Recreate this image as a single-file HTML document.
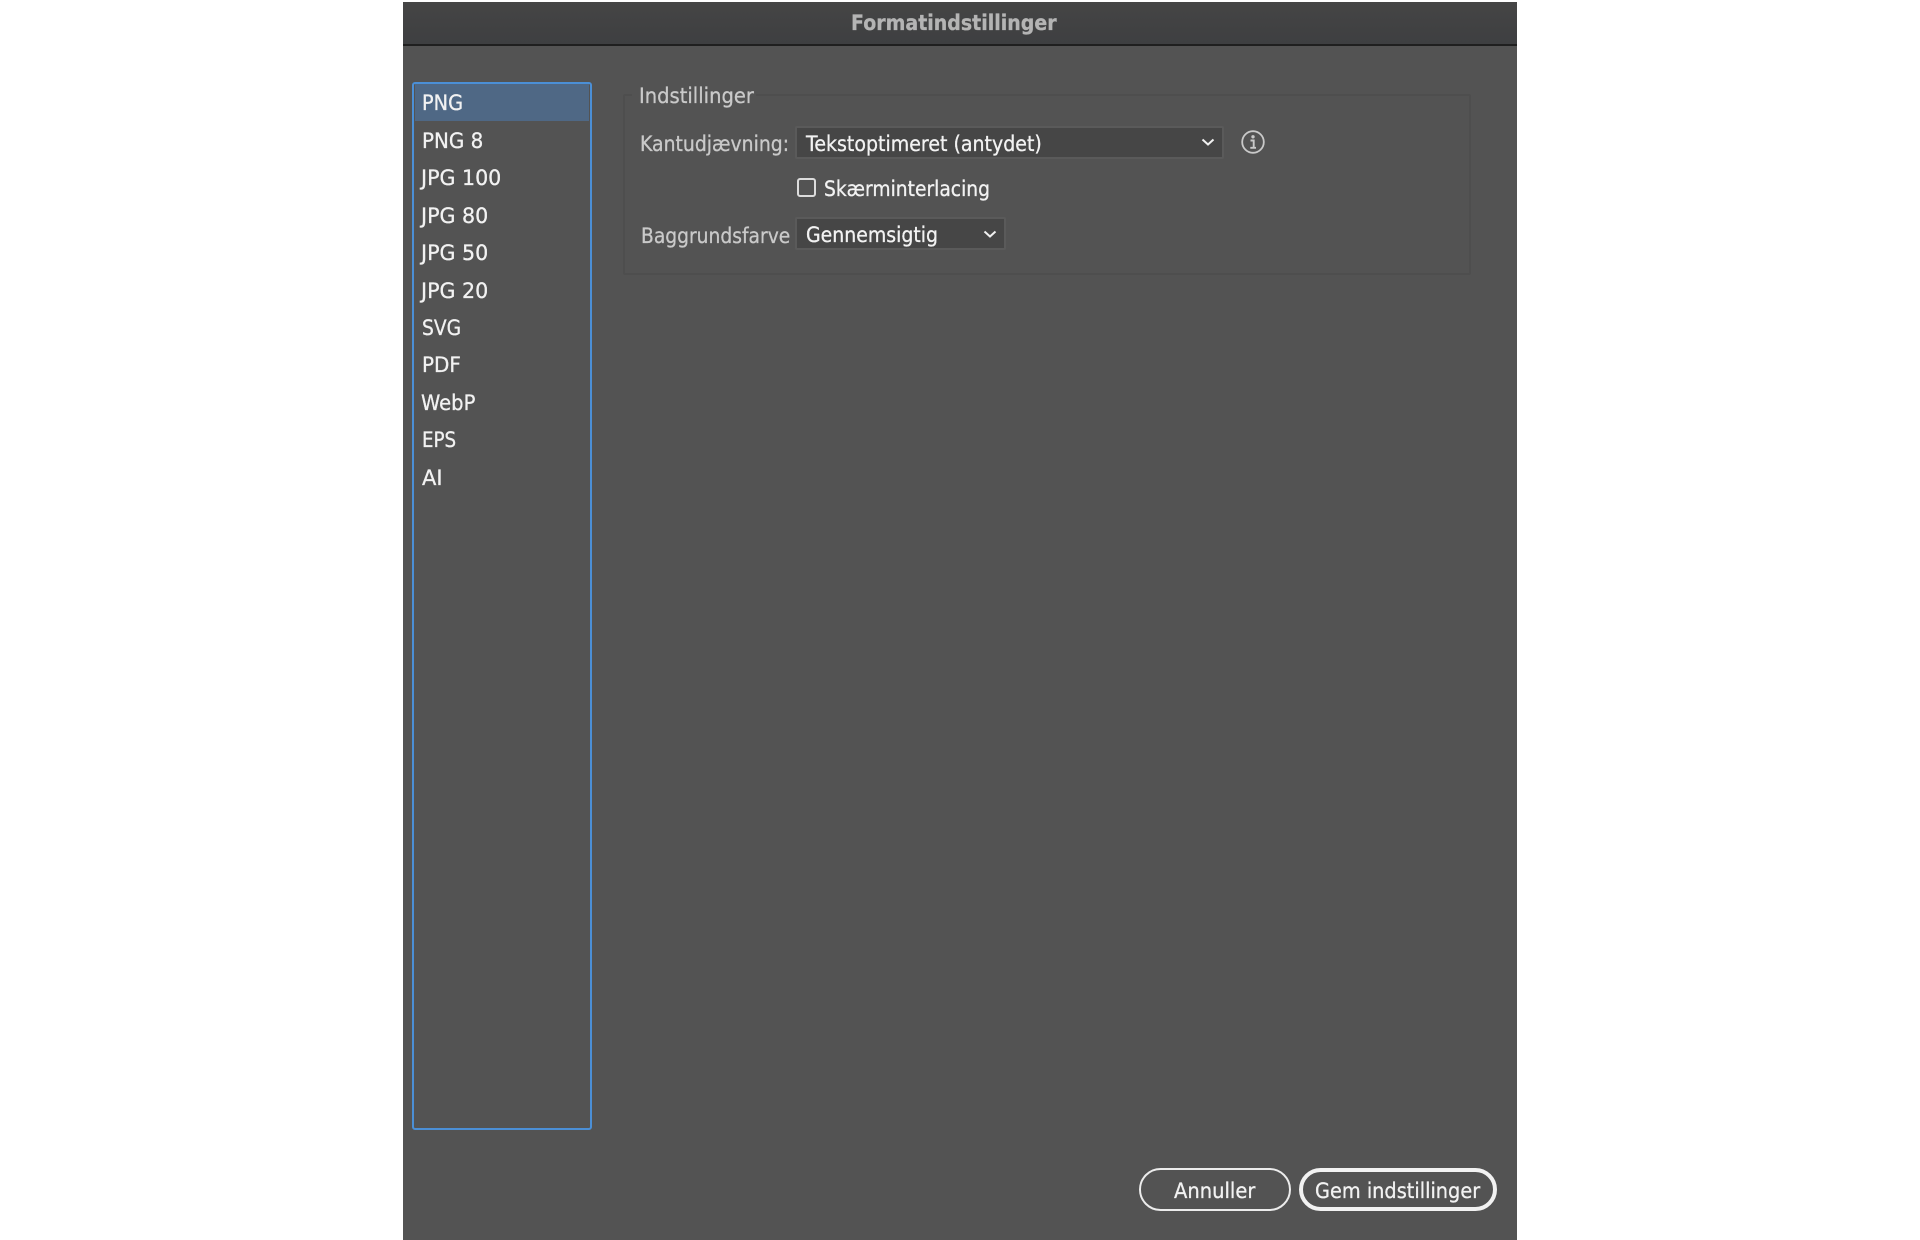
<!DOCTYPE html>
<html lang="da"><head><meta charset="utf-8"><title>Formatindstillinger</title>
<style>
html,body{margin:0;padding:0;background:#fff}
body{width:1920px;height:1240px;position:relative;overflow:hidden;font-family:"DejaVu Sans","Liberation Sans",sans-serif}
.a{position:absolute;box-sizing:border-box}
.t{position:absolute;white-space:nowrap;font-size:21px;line-height:26px;height:26px;transform:scaleX(.89);transform-origin:0 50%;color:#f2f2f2;-webkit-text-stroke:.3px currentColor;filter:blur(.3px)}
.l{color:#c9c9c9}
.sel{background:#464646;border:2px solid #5a5a5a;border-radius:2px}
</style></head><body>
<div class="a" style="left:403px;top:2px;width:1114px;height:1238px;background:#535353"></div>
<div class="a" style="left:403px;top:2px;width:1114px;height:42px;background:linear-gradient(#454545,#3e3f41)"></div>
<div class="a" style="left:403px;top:44px;width:1114px;height:2px;background:#1f1f1f"></div>
<div class="t" style="left:851px;top:10px;font-weight:bold;color:#b4b4b4;transform:scaleX(.904)">Formatindstillinger</div>

<div class="a" style="left:412px;top:82px;width:180px;height:1048px;border:2px solid #4b8fd6;border-radius:3px"></div>
<div class="a" style="left:415px;top:84px;width:174px;height:37px;background:#4f6885"></div>
<div class="t" style="left:422px;top:90px;transform:scaleX(.92)">PNG</div>
<div class="t" style="left:422px;top:128px;transform:scaleX(.948)">PNG 8</div>
<div class="t" style="left:421px;top:165px;transform:scaleX(.98)">JPG 100</div>
<div class="t" style="left:421px;top:203px;transform:scaleX(.98)">JPG 80</div>
<div class="t" style="left:421px;top:240px;transform:scaleX(.98)">JPG 50</div>
<div class="t" style="left:421px;top:278px;transform:scaleX(.98)">JPG 20</div>
<div class="t" style="left:422px;top:315px">SVG</div>
<div class="t" style="left:422px;top:352px;transform:scaleX(.95)">PDF</div>
<div class="t" style="left:421px;top:390px;transform:scaleX(.93)">WebP</div>
<div class="t" style="left:422px;top:427px;transform:scaleX(.87)">EPS</div>
<div class="t" style="left:422px;top:465px;transform:scaleX(1)">AI</div>

<div class="a" style="left:623px;top:94px;width:848px;height:181px;border:2px solid #4e4e4e;border-radius:2px"></div>
<div class="a" style="left:632px;top:89px;width:124px;height:10px;background:#535353"></div>
<div class="t l" style="left:639px;top:83px;transform:scaleX(.93)">Indstillinger</div>

<div class="t l" style="left:640px;top:131px;transform:scaleX(.897)">Kantudjævning:</div>
<div class="a sel" style="left:795px;top:126px;width:429px;height:33px"></div>
<div class="t" style="left:806px;top:131px;transform:scaleX(.904)">Tekstoptimeret (antydet)</div>
<svg class="a" style="left:1200px;top:136px" width="16" height="12" viewBox="0 0 16 12"><path d="M2.500 3.500 8 8.500l5.500-5" fill="none" stroke="#f0f0f0" stroke-width="2"/></svg>
<svg class="a" style="left:1240px;top:129px" width="26" height="26" viewBox="0 0 26 26"><circle cx="13" cy="13" r="10.800" fill="none" stroke="#c9c9c9" stroke-width="1.800"/><circle cx="13" cy="7.800" r="1.700" fill="#c9c9c9"/><path d="M10.500 11.500H13.700V18.500M10.300 18.800H16" fill="none" stroke="#c9c9c9" stroke-width="1.900"/></svg>

<div class="a" style="left:797px;top:178px;width:19px;height:19px;border:2px solid #dcdcdc;border-radius:3px"></div>
<div class="t" style="left:824px;top:176px">Skærminterlacing</div>

<div class="t l" style="left:641px;top:223px">Baggrundsfarve</div>
<div class="a sel" style="left:795px;top:217px;width:211px;height:33px"></div>
<div class="t" style="left:806px;top:222px;transform:scaleX(.9)">Gennemsigtig</div>
<svg class="a" style="left:982px;top:228px" width="16" height="12" viewBox="0 0 16 12"><path d="M2.500 3.500 8 8.500l5.500-5" fill="none" stroke="#f0f0f0" stroke-width="2"/></svg>

<div class="a" style="left:1139px;top:1168px;width:152px;height:43px;border:2px solid #ececec;border-radius:22px"></div>
<div class="t" style="left:1174px;top:1178px;transform:scaleX(.93)">Annuller</div>
<div class="a" style="left:1299px;top:1168px;width:198px;height:43px;border:4px solid #f2f2f2;border-radius:22px"></div>
<div class="t" style="left:1315px;top:1178px;transform:scaleX(.92)">Gem indstillinger</div>
</body></html>
